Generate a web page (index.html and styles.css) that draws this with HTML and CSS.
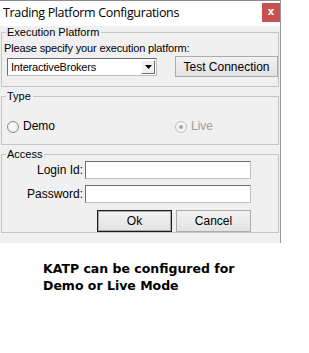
FILE: index.html
```html
<!DOCTYPE html>
<html lang="en">
<head>
    <meta charset="UTF-8">
    <title>Trading Platform Configurations</title>
    <link rel="stylesheet" href="styles.css">
</head>
<body>
    <div class="window">
        <div class="titlebar">
            <span class="title">Trading Platform Configurations</span>
            <span class="close">x</span>
        </div>
        <div class="client">
            <!-- Execution platform -->
            <fieldset class="group group-platform">
                <legend>Execution Platform</legend>
                <div class="hint">Please specify your execution platform:</div>
                <div class="platform-row">
                    <div class="combo">
                        <span class="combo-value">InteractiveBrokers</span>
                        <span class="combo-arrow">
                            <svg width="7" height="4" viewBox="0 0 7 4"><path d="M0 0h7L3.5 4z" fill="#000"/></svg>
                        </span>
                    </div>
                    <button class="btn btn-test">Test Connection</button>
                </div>
            </fieldset>

            <!-- Type -->
            <fieldset class="group group-type">
                <legend>Type</legend>
                <div class="radio-row">
                    <label class="radio"><span class="radio-dot"></span>Demo</label>
                    <label class="radio disabled"><span class="radio-dot checked"></span>Live</label>
                </div>
            </fieldset>

            <!-- Access -->
            <fieldset class="group group-access">
                <legend>Access</legend>
                <div class="access-grid">
                    <label class="field-label" for="login">Login Id:</label>
                    <input class="field" type="text" id="login">
                    <label class="field-label" for="password">Password:</label>
                    <input class="field" type="password" id="password">
                    <div class="actions">
                        <button class="btn btn-ok">Ok</button>
                        <button class="btn">Cancel</button>
                    </div>
                </div>
            </fieldset>
        </div>
    </div>

    <p class="note">KATP can be configured for<br>Demo or Live Mode</p>
</body>
</html>
```

FILE: styles.css
```css
/* Base */
* {
    box-sizing: border-box;
}

body {
    margin: 0;
    background: #ffffff;
    font-family: "Liberation Sans", Arial, sans-serif;
    font-size: 11px;
    color: #000;
}

/* Window frame */
.window {
    width: 281px;
    border-top: 1px solid #8c8c8c;
    border-right: 1px solid #9a9a9a;
}

.titlebar {
    display: flex;
    align-items: flex-start;
    justify-content: space-between;
    height: 25px;
    background: #ffffff;
}

.title {
    font-family: "Open Sans", "Noto Sans", sans-serif;
    font-size: 12.5px;
    letter-spacing: -0.35px;
    line-height: 18px;
    padding: 3px 0 0 3px;
}

.close {
    width: 18px;
    height: 19px;
    margin-top: 2px;
    background: #c75050;
    color: #fff;
    font-family: "DejaVu Sans", sans-serif;
    font-weight: bold;
    font-size: 10px;
    line-height: 18px;
    text-align: center;
}

.client {
    height: 217px;
    overflow: hidden;
    background: #f0f0f0;
}

/* Group boxes */
.group {
    margin: 0 1px;
    padding: 0;
    border: 1px solid #c4c4c4;
    min-width: 0;
}

.group legend {
    margin-left: 4px;
    padding: 0 2px 0 1px;
    line-height: 12px;
}

.group-type,
.group-access {
    margin-top: 3px;
}

.hint {
    line-height: 14px;
    letter-spacing: -0.15px;
    padding: 3px 0 0 2px;
}

.platform-row {
    display: flex;
    align-items: center;
    padding: 1px 0 9px 5px;
}

.combo {
    display: flex;
    align-items: center;
    justify-content: space-between;
    width: 150px;
    height: 18px;
    background: #fff;
    border: 1px solid;
    border-color: #6d6d6d #bdbdbd #bdbdbd #6d6d6d;
}

.combo-value {
    padding-left: 3px;
    letter-spacing: -0.2px;
}

.combo-arrow {
    display: flex;
    align-items: center;
    justify-content: center;
    width: 14px;
    height: 14px;
    margin-right: 1px;
    background: #f0f0f0;
    border: 1px solid;
    border-color: #fff #6d6d6d #6d6d6d #fff;
}

/* Buttons */
.btn {
    height: 22px;
    width: 75px;
    padding: 0;
    font-family: inherit;
    font-size: 12px;
    color: #000;
    background: linear-gradient(#f2f2f2, #e3e3e3);
    border: 1px solid #acacac;
    border-radius: 0;
}

.btn-test {
    width: 103px;
    height: 21px;
    margin-left: 18px;
}

.btn-ok {
    border: 1px solid #1b1b1b;
    box-shadow: inset 0 0 0 1px #a8a8a8;
}

/* Radios */
.radio-row {
    display: grid;
    grid-template-columns: 168px auto;
    padding: 18px 0 11px 5px;
}

.radio {
    display: flex;
    align-items: center;
    gap: 4px;
    font-size: 12px;
    line-height: 13px;
}

.radio-dot {
    width: 12px;
    height: 12px;
    border-radius: 50%;
    border: 1px solid #8a8a8a;
    background: radial-gradient(circle at 40% 40%, #ffffff, #e4e4e4);
    display: flex;
    align-items: center;
    justify-content: center;
}

.radio.disabled {
    color: #a0a0a0;
}

.radio.disabled .radio-dot {
    border-color: #bcbcbc;
    background: #f4f4f4;
}

.radio-dot.checked::after {
    content: "";
    width: 4px;
    height: 4px;
    border-radius: 50%;
    background: #a6a6a6;
}

/* Access form */
.access-grid {
    display: grid;
    grid-template-columns: 83px 166px;
    row-gap: 6px;
    padding-top: 1px;
}

.field-label {
    align-self: center;
    text-align: right;
    padding-right: 2px;
    font-size: 12px;
}

.field {
    height: 18px;
    margin: 0;
    border: 1px solid;
    border-color: #6d6d6d #bdbdbd #bdbdbd #6d6d6d;
    background: #fff;
}

.actions {
    grid-column: 2;
    display: flex;
    justify-content: flex-end;
    gap: 4px;
    margin-top: 1px;
}

/* Caption under the dialog */
.note {
    margin: 17px 0 0 43px;
    font-family: "DejaVu Sans", Verdana, sans-serif;
    font-weight: bold;
    font-size: 12.5px;
    line-height: 17px;
}
```
